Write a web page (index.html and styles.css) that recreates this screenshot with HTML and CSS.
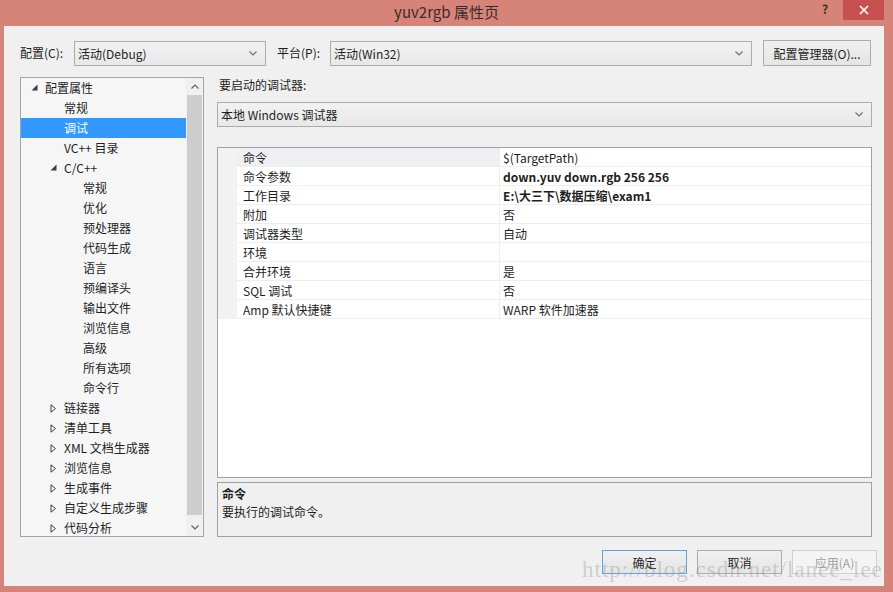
FILE: index.html
```html
<!DOCTYPE html>
<html lang="zh-CN">
<head>
<meta charset="utf-8">
<title>yuv2rgb 属性页</title>
<link rel="stylesheet" href="styles.css">
</head>
<body>
<div class="window">
  <div class="titlebar">
    <span class="title">yuv2rgb 属性页</span>
    <span class="help">?</span>
    <span class="close"><svg width="10" height="10" viewBox="0 0 10 10"><path d="M1 1 L9 9 M9 1 L1 9" stroke="#fff" stroke-width="1.6"/></svg></span>
  </div>
  <div class="client">
    <div class="config-row">
      <label class="lbl lbl1">配置(C):</label>
      <div class="combo combo1"><span>活动(Debug)</span><svg class="chev" width="8" height="5" viewBox="0 0 8 5"><path d="M0.5 0.5 L4 4 L7.5 0.5" fill="none" stroke="#707070" stroke-width="1.2"/></svg></div>
      <label class="lbl lbl2">平台(P):</label>
      <div class="combo combo2"><span>活动(Win32)</span><svg class="chev" width="8" height="5" viewBox="0 0 8 5"><path d="M0.5 0.5 L4 4 L7.5 0.5" fill="none" stroke="#707070" stroke-width="1.2"/></svg></div>
      <button class="btn cfg-btn">配置管理器(O)...</button>
    </div>
    <div class="main">
      <div class="tree">
        <ul class="tree-list">
          <li class="node l0"><svg class="tri" width="7" height="7" viewBox="0 0 7 7"><polygon points="6.5,0.5 6.5,6.5 0.5,6.5" fill="#3c3c3c"/></svg>配置属性</li>
          <li class="node l1">常规</li>
          <li class="node l1 sel">调试</li>
          <li class="node l1">VC++ 目录</li>
          <li class="node l1"><svg class="tri" width="7" height="7" viewBox="0 0 7 7"><polygon points="6.5,0.5 6.5,6.5 0.5,6.5" fill="#3c3c3c"/></svg>C/C++</li>
          <li class="node l2">常规</li>
          <li class="node l2">优化</li>
          <li class="node l2">预处理器</li>
          <li class="node l2">代码生成</li>
          <li class="node l2">语言</li>
          <li class="node l2">预编译头</li>
          <li class="node l2">输出文件</li>
          <li class="node l2">浏览信息</li>
          <li class="node l2">高级</li>
          <li class="node l2">所有选项</li>
          <li class="node l2">命令行</li>
          <li class="node l1"><svg class="tri" width="7" height="9" viewBox="0 0 7 9"><polygon points="1,0.8 5.5,4.5 1,8.2" fill="none" stroke="#3c3c3c" stroke-width="1"/></svg>链接器</li>
          <li class="node l1"><svg class="tri" width="7" height="9" viewBox="0 0 7 9"><polygon points="1,0.8 5.5,4.5 1,8.2" fill="none" stroke="#3c3c3c" stroke-width="1"/></svg>清单工具</li>
          <li class="node l1"><svg class="tri" width="7" height="9" viewBox="0 0 7 9"><polygon points="1,0.8 5.5,4.5 1,8.2" fill="none" stroke="#3c3c3c" stroke-width="1"/></svg>XML 文档生成器</li>
          <li class="node l1"><svg class="tri" width="7" height="9" viewBox="0 0 7 9"><polygon points="1,0.8 5.5,4.5 1,8.2" fill="none" stroke="#3c3c3c" stroke-width="1"/></svg>浏览信息</li>
          <li class="node l1"><svg class="tri" width="7" height="9" viewBox="0 0 7 9"><polygon points="1,0.8 5.5,4.5 1,8.2" fill="none" stroke="#3c3c3c" stroke-width="1"/></svg>生成事件</li>
          <li class="node l1"><svg class="tri" width="7" height="9" viewBox="0 0 7 9"><polygon points="1,0.8 5.5,4.5 1,8.2" fill="none" stroke="#3c3c3c" stroke-width="1"/></svg>自定义生成步骤</li>
          <li class="node l1"><svg class="tri" width="7" height="9" viewBox="0 0 7 9"><polygon points="1,0.8 5.5,4.5 1,8.2" fill="none" stroke="#3c3c3c" stroke-width="1"/></svg>代码分析</li>
        </ul>
        <div class="vscroll">
          <div class="arrow"><svg width="8" height="5" viewBox="0 0 8 5"><path d="M0.5 4.5 L4 1 L7.5 4.5" fill="none" stroke="#606060" stroke-width="1.2"/></svg></div>
          <div class="track"><div class="thumb"></div></div>
          <div class="arrow"><svg width="8" height="5" viewBox="0 0 8 5"><path d="M0.5 0.5 L4 4 L7.5 0.5" fill="none" stroke="#606060" stroke-width="1.2"/></svg></div>
        </div>
      </div>
      <div class="right">
        <div class="dbg-label">要启动的调试器:</div>
        <div class="combo combo-dbg"><span>本地 Windows 调试器</span><svg class="chev" width="8" height="5" viewBox="0 0 8 5"><path d="M0.5 0.5 L4 4 L7.5 0.5" fill="none" stroke="#707070" stroke-width="1.2"/></svg></div>
        <div class="grid">
          <div class="row first"><div class="gut"></div><div class="name">命令</div><div class="val">$(TargetPath)</div></div>
          <div class="row"><div class="gut"></div><div class="name">命令参数</div><div class="val bold">down.yuv down.rgb 256 256</div></div>
          <div class="row"><div class="gut"></div><div class="name">工作目录</div><div class="val bold">E:\大三下\数据压缩\exam1</div></div>
          <div class="row"><div class="gut"></div><div class="name">附加</div><div class="val">否</div></div>
          <div class="row"><div class="gut"></div><div class="name">调试器类型</div><div class="val">自动</div></div>
          <div class="row"><div class="gut"></div><div class="name">环境</div><div class="val"></div></div>
          <div class="row"><div class="gut"></div><div class="name">合并环境</div><div class="val">是</div></div>
          <div class="row"><div class="gut"></div><div class="name">SQL 调试</div><div class="val">否</div></div>
          <div class="row"><div class="gut"></div><div class="name">Amp 默认快捷键</div><div class="val">WARP 软件加速器</div></div>
        </div>
        <div class="desc">
          <div class="desc-title">命令</div>
          <div class="desc-text">要执行的调试命令。</div>
        </div>
      </div>
    </div>
    <div class="buttons">
      <button class="btn dlg default">确定</button>
      <button class="btn dlg">取消</button>
      <button class="btn dlg disabled">应用(A)</button>
    </div>
  </div>
  <div class="watermark">http://blog.csdn.net/lanee_lee</div>
</div>
</body>
</html>
```

FILE: styles.css
```css
* { box-sizing: border-box; }
html, body { margin: 0; padding: 0; }
body {
  width: 893px;
  height: 592px;
  overflow: hidden;
  font-family: "Noto Sans CJK SC", "Noto Sans", sans-serif;
  font-size: 12px;
  color: #1e1e1e;
  background: #d6847a;
}
.window {
  position: relative;
  width: 893px;
  height: 592px;
  background: #d6847a;
}
.titlebar {
  position: relative;
  height: 26px;
  display: flex;
  justify-content: center;
  align-items: center;
}
.title {
  font-size: 15px;
  color: #3a2a28;
  line-height: 20px;
  margin-top: -2px;
}
.help {
  position: absolute;
  left: 822px;
  top: 1px;
  font-size: 12px;
  font-weight: bold;
  color: #3a2a28;
  line-height: 16px;
}
.close {
  position: absolute;
  left: 843px;
  top: 0;
  width: 41px;
  height: 20px;
  background: #c75050;
  display: flex;
  align-items: center;
  justify-content: center;
}
.client {
  margin-left: 4px;
  width: 880px;
  height: 560px;
  background: #f0f0f0;
  padding: 14px 12px 0 16px;
}
.config-row {
  display: flex;
  align-items: center;
  height: 26px;
}
.lbl { line-height: 16px; }
.lbl1 { width: 54px; }
.lbl2 { width: 53px; margin-left: 11px; }
.combo {
  height: 25px;
  border: 1px solid #acacac;
  background: linear-gradient(#f2f2f2, #e8e8e8);
  display: flex;
  align-items: center;
  justify-content: space-between;
  padding: 0 8px 0 3px;
}
.combo1 { width: 192px; }
.combo2 { width: 422px; }
.chev { flex: none; }
.btn {
  font-family: inherit;
  font-size: 12px;
  color: #1e1e1e;
  border: 1px solid #acacac;
  background: linear-gradient(#f0f0f0, #e5e5e5);
  padding: 0;
  height: 26px;
}
.cfg-btn { width: 108px; margin-left: 11px; }
.main {
  display: flex;
  margin-top: 11px;
  height: 460px;
}
.tree {
  width: 184px;
  border: 1px solid #a5a5a5;
  background: #f6f6f6;
  display: flex;
}
.tree-list {
  list-style: none;
  margin: 0;
  padding: 0;
  flex: 1;
}
.node {
  height: 20px;
  line-height: 19px;
  position: relative;
  white-space: nowrap;
}
.node.l0 { padding-left: 24px; }
.node.l1 { padding-left: 43px; }
.node.l2 { padding-left: 62px; }
.node .tri {
  position: absolute;
  top: 6px;
}
.node.l0 .tri { left: 10px; }
.node.l1 .tri { left: 29px; }
.node.sel { background: #3399ff; color: #fff; }
.vscroll {
  width: 17px;
  display: flex;
  flex-direction: column;
  background: #f0f0f0;
}
.arrow {
  height: 17px;
  display: flex;
  align-items: center;
  justify-content: center;
}
.track {
  flex: 1;
  padding: 0 1px 4px 1px;
}
.thumb {
  height: 100%;
  background: #cdcdcd;
}
.right {
  margin-left: 13px;
  width: 655px;
  display: flex;
  flex-direction: column;
}
.dbg-label {
  line-height: 16px;
  height: 16px;
  margin-left: 2px;
}
.combo-dbg {
  margin-top: 9px;
  height: 25px;
  padding-left: 3px;
}
.grid {
  margin-top: 20px;
  height: 331px;
  border: 1px solid #a0a0a0;
  background: #fff;
}
.row {
  display: grid;
  grid-template-columns: 19px 263px 1fr;
  height: 19px;
}
.gut { background: #f2f2f2; }
.name, .val {
  line-height: 19px;
  height: 19px;
  border-bottom: 1px solid #eeeeee;
  white-space: nowrap;
}
.name { padding-left: 6px; border-right: 1px solid #eeeeee; }
.val { padding-left: 3px; }
.row.first .name { background: #eef0f3; }
.val.bold { font-weight: bold; }
.desc {
  margin-top: 4px;
  height: 55px;
  border: 1px solid #a0a0a0;
  background: #f0f0f0;
  padding: 2px 4px;
}
.desc-title { font-weight: bold; line-height: 18px; }
.desc-text { line-height: 18px; }
.buttons {
  display: flex;
  justify-content: flex-end;
  margin-top: 13px;
  margin-right: -5px;
  gap: 10px;
}
.dlg { width: 85px; height: 24px; }
.dlg.default { border-color: #5ea2e0; }
.dlg.disabled { color: #a0a0a0; border-color: #d0d0d0; background: #f4f4f4; }
.watermark {
  position: absolute;
  left: 582px;
  top: 557px;
  font-family: "Liberation Serif", serif;
  font-size: 23px;
  letter-spacing: 1px;
  color: rgba(150, 150, 150, 0.4);
  white-space: nowrap;
}
```
